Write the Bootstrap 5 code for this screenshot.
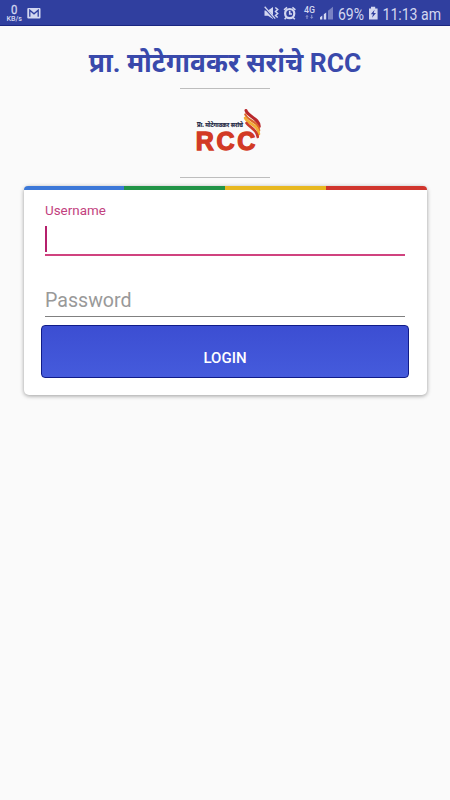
<!DOCTYPE html>
<html lang="mr">
<head>
<meta charset="utf-8">
<meta name="viewport" content="width=device-width, initial-scale=1">
<title>RCC Login</title>
<link href="https://cdn.jsdelivr.net/npm/bootstrap@5.3.0/dist/css/bootstrap.min.css" rel="stylesheet">
<style>
body{background:#fafafa;font-family:Roboto,"Noto Sans",sans-serif;min-height:800px;overflow:hidden}
.status{height:26px;background:#303f9f;border-bottom:1px solid #1a2680;padding:0 6px 0 5px}
.status svg{display:block;height:25px;flex:none}
.app-title{color:#3949ab;font-size:26.4px;line-height:36px;font-weight:700;margin-top:19px;height:43px}
.rule{width:90px;height:1px;background:#bdbdbd}
.emblem{height:88px}
.login-card{width:403px;height:209px;margin-top:8px;border-radius:5px;box-shadow:0 1px 4px rgba(0,0,0,.38)}
.stripe{height:4px;border-radius:4px 4px 0 0}
.stripe div{flex:1}
.fields{padding:0 21.5px}
.name-label{color:#c2417e;font-size:13.4px;line-height:16px;margin-top:13px}
.name-box{height:37px;border-bottom:2px solid #d0437f;padding-top:7px}
.caret{width:2px;height:26px;background:#b5206c}
.pass-box{height:61px;border-bottom:1px solid #808080;color:#999;font-size:19.6px;line-height:24px;padding-top:33px}
.login-btn{width:368px;height:53px;margin:8px auto 0;border:1px solid #101c89;border-radius:4px;background:linear-gradient(#3c4ed2,#455bdc);font-size:15px;font-weight:500;color:#fff;padding:12px 0 0;line-height:18px}
.login-btn:hover{color:#fff;border-color:#101c89}
</style>
<script src="https://cdn.jsdelivr.net/npm/bootstrap@5.3.0/dist/js/bootstrap.bundle.min.js"></script>
</head>
<body>
<header class="status d-flex justify-content-between">
  <svg width="40" height="25" viewBox="5 0 40 25" fill="#d3d7f0" font-family="Roboto,sans-serif">
    <text x="11" y="14.3" font-size="12.5" stroke="#d3d7f0" stroke-width=".3" textLength="6.4" lengthAdjust="spacingAndGlyphs">0</text>
    <text x="6.5" y="21" font-size="6.6" font-weight="500" textLength="15.5" lengthAdjust="spacingAndGlyphs">KB/s</text>
    <rect x="27.3" y="8" width="13.2" height="10.6" rx="1"/>
    <path d="M29.8 16.8V10.2L34 13.8L38.2 10.2V16.8" fill="none" stroke="#303f9f" stroke-width="1.3"/>
  </svg>
  <svg width="182" height="25" viewBox="262 0 182 25" fill="#d3d7f0" font-family="Roboto,sans-serif">
    <path d="M264.5 10.5H268L273 7V19L268 15.7H264.5Z"/>
    <path d="M264 7L275 19" stroke="#303f9f" stroke-width="2"/>
    <path d="M264.7 6.8L275.2 18.6" stroke="#d3d7f0" stroke-width="1.3"/>
    <path d="M275.3 7.5L277.7 9.5L275.5 11.5L277.7 13.5L275.5 15.5L277.7 17.5" fill="none" stroke="#d3d7f0" stroke-width="1.5"/>
    <circle cx="289.7" cy="13.6" r="4.6" fill="none" stroke="#d3d7f0" stroke-width="2.2"/>
    <path d="M289.7 10.8V14H292M284 9.8L287 7.4M292.4 7.4L295.4 9.8M286.3 17.5L284.6 19.3M293 17.5L294.8 19.3" fill="none" stroke="#d3d7f0" stroke-width="1.6"/>
    <text x="304" y="12.9" font-size="8.4" font-weight="500" textLength="11" lengthAdjust="spacingAndGlyphs">4G</text>
    <path opacity=".5" d="M307 14.7L308.7 16.7H307.6V19H306.4V16.7H305.3ZM311.7 19L313.4 17H312.3V14.7H311.1V17H310Z"/>
    <path d="M320 17.2L322.3 15.5V19.4H320ZM323.8 14.3L326.2 12.4V19.4H323.8Z"/>
    <path d="M328 10.7L333 6.8V19.4H328Z" opacity=".45"/>
    <text x="338" y="20" font-size="16.6" textLength="26" lengthAdjust="spacingAndGlyphs">69%</text>
    <path d="M369 8.5H371V6.7H375.2V8.5H377.6V19.6H369Z"/>
    <path d="M374.6 9.8L370.8 14.2H373L372 17.8L376 13H373.7Z" fill="#303f9f"/>
    <text x="382.5" y="20" font-size="16.6" textLength="58.5" lengthAdjust="spacingAndGlyphs">11:13 am</text>
  </svg>
</header>
<main class="d-flex flex-column align-items-center">
  <h1 class="app-title text-center text-nowrap mb-0">प्रा. मोटेगावकर सरांचे RCC</h1>
  <div class="rule"></div>
  <div class="emblem d-flex align-items-center justify-content-center">
    <svg width="90" height="88" viewBox="180 89 90 88">
      <text x="197" y="127.3" font-family="Noto Sans,sans-serif" font-size="6.4" font-weight="700" fill="#252a45" stroke="#252a45" stroke-width=".2" textLength="46" lengthAdjust="spacingAndGlyphs">प्रा. मोटेगावकर सरांचे</text>
      <text x="195.7" y="149.7" font-family="Liberation Sans,sans-serif" font-size="25" font-weight="700" fill="#d23a25" stroke="#d23a25" stroke-width="1.3" textLength="59.5" lengthAdjust="spacing">RCC</text>
      <g fill="none" stroke-linecap="round">
        <path d="M246 110.5C248 117 259 118 259.3 126.5" stroke="#b9282c" stroke-width="3"/>
        <path d="M245.3 114.5C247.5 121 259 121.5 259.2 130.5" stroke="#dc662b" stroke-width="2.2"/>
        <path d="M245.2 118C247.5 124 258.5 124.5 258.9 134" stroke="#f1ad35" stroke-width="2.8"/>
        <path d="M246.500 123C249.500 127.500 257 129 257.800 137" stroke="#cc3b2b" stroke-width="2.600"/>
      </g>
    </svg>
  </div>
  <div class="rule"></div>
  <form class="login-card card border-0 bg-white">
    <div class="stripe d-flex overflow-hidden">
      <div style="background:#3c78d8"></div><div style="background:#219447"></div><div style="background:#e8b820"></div><div style="background:#d0352d"></div>
    </div>
    <div class="fields">
      <div class="name-label">Username</div>
      <div class="name-box"><div class="caret"></div></div>
      <div class="pass-box">Password</div>
    </div>
    <button type="button" class="btn login-btn">LOGIN</button>
  </form>
</main>
</body>
</html>
